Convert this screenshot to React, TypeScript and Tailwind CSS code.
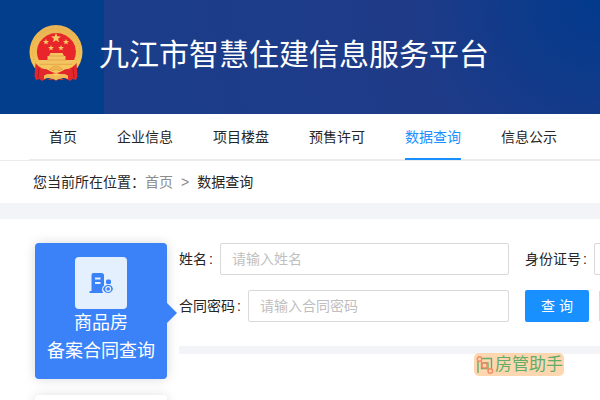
import React from "react";

const navItems = ["首页", "企业信息", "项目楼盘", "预售许可", "数据查询", "信息公示"];

function Star({ x, y, r }: { x: number; y: number; r: number }) {
  const points = Array.from({ length: 10 }, (_, i) => {
    const radius = i % 2 === 0 ? r : r * 0.42;
    const angle = (Math.PI / 5) * i - Math.PI / 2;
    return `${(x + radius * Math.cos(angle)).toFixed(2)},${(y + radius * Math.sin(angle)).toFixed(2)}`;
  }).join(" ");
  return <polygon points={points} fill="#f6cb63" />;
}

function Emblem() {
  return (
    <svg className="h-14 w-[54px] shrink-0" viewBox="0 0 54 56" role="img" aria-label="国徽">
      <defs>
        <linearGradient id="gold" x1="0" y1="0" x2="0" y2="1">
          <stop offset="0" stopColor="#e8b456" />
          <stop offset="0.5" stopColor="#f2bd50" />
          <stop offset="1" stopColor="#fad067" />
        </linearGradient>
      </defs>
      <ellipse cx="27" cy="27" rx="26.5" ry="27" fill="url(#gold)" />
      <path d="M6.500 38 Q10 43 18 45 L17 54 L13 56 L10.500 54 L7 55 L5.500 51 Z" fill="#e2282b" />
      <path d="M47.500 38 Q44 43 36 45 L37 54 L41 56 L43.500 54 L47 55 L48.500 51 Z" fill="#e2282b" />
      <ellipse cx="27" cy="26" rx="23.500" ry="22.500" fill="none" stroke="#dca047" strokeWidth="0.800" strokeDasharray="1 2" />
      <path d="M9.800 35 A19.500 18.800 0 1 1 45 35 Z" fill="#e8252b" />
      <Star x={27} y={13} r={5.2} />
      <Star x={17} y={17} r={3.2} />
      <Star x={37} y={17} r={3.2} />
      <Star x={22} y={23} r={3} />
      <Star x={32} y={23} r={3} />
      <path d="M21.500 28 H33.500 L35 31 H20 Z M18.500 31 H36.500 V35 H18.500 Z M10 35 H44.500 V39 H10 Z" fill="#f4c461" />
      <path d="M20 31 H35 M18 35 H37 M11 39.300 H43.500" stroke="#dd9040" strokeWidth="0.600" />
      <path d="M14 44 Q18 43.500 21 46 Q27 50 33 46 Q36 43.500 40 44 L39 49 Q33 50 27 48 Q21 50 15 49 Z" fill="#e2282b" />
      <path d="M20.500 44 Q27 38 33.500 44 Q30 47 27 44.500 Q24 47 20.500 44 Z" fill="#f0b450" stroke="#d9923a" strokeWidth="0.500" />
      <path d="M15 54 V50.500 Q21 48 27 51 Q33 48 39 50.500 V54 Q33 51.500 27 55.500 Q21 51.500 15 54 Z" fill="#f2b955" />
      <path d="M18 55 Q22 52.500 27 55.800 Q32 52.500 36 55 Z" fill="#e2282b" />
      <path d="M10 43 L9 53 M44 43 L45 53" stroke="#b71824" strokeWidth="1" fill="none" />
    </svg>
  );
}

function HouseIcon() {
  return (
    <svg className="h-6 w-6" viewBox="0 0 24 24" aria-hidden="true">
      <path
        fill="#3b82f8"
        fillRule="evenodd"
        d="M4.500 2 H12.500 Q15 2 15 4.500 V14.500 Q13 16 13 18.500 Q13 20.500 14.300 22 H0.500 V20.500 Q0.500 20 1.500 20 H2.500 V4 Q2.500 2 4.500 2 Z M6 6.500 V8.500 H11.500 V6.500 Z M6 11 V13 H11.500 V11 Z"
      />
      <rect x="17" y="8.500" width="5" height="4.500" rx="1.500" fill="#3b82f8" />
      <path d="M14 18 Q16 13.800 19.300 13.800 Q22.800 13.800 24 18 Q22.500 22 19.200 22 Q15.500 22 14 18 Z" fill="#3b82f8" />
      <circle cx="19.200" cy="18" r="2.400" fill="none" stroke="#e4f0fe" strokeWidth="1.200" />
    </svg>
  );
}

function BadgeMark() {
  return (
    <svg className="h-[18px] w-[18px] shrink-0" viewBox="0 0 18 18" fill="none" aria-hidden="true">
      <path d="M2 5 V17 M6 2.500 H15.500 V13" stroke="#62ae68" strokeWidth="1.400" />
      <path d="M5.500 7 H12 V12.500 H5.500 Z" stroke="#62ae68" strokeWidth="1.300" />
      <path d="M4.500 4.500 L6.500 7 M10.500 11.500 L12.500 13.500" stroke="#f68a64" strokeWidth="1.200" />
      <circle cx="3.500" cy="3" r="2.200" stroke="#f68a64" strokeWidth="1.400" />
      <circle cx="8.500" cy="9.500" r="2.600" stroke="#f68a64" strokeWidth="1.400" />
      <circle cx="14.300" cy="15" r="2.300" stroke="#f68a64" strokeWidth="1.400" />
    </svg>
  );
}

function Field({ id, label, placeholder }: { id: string; label: string; placeholder?: string }) {
  return (
    <div className="flex h-8 items-center">
      <label htmlFor={id} className="flex shrink-0">
        {label}
        <span className="w-[13px] pl-0.5">:</span>
      </label>
      <input
        id={id}
        type="text"
        placeholder={placeholder}
        className="h-8 min-w-0 flex-1 rounded-xs border border-[#d9d9d9] px-[11px] placeholder:text-[#bfbfbf]"
      />
    </div>
  );
}

export default function App() {
  return (
    <div className="relative h-screen overflow-hidden bg-white font-['Liberation_Sans','Noto_Sans_CJK_SC',sans-serif] text-sm text-[#262626]">
      <header className="flex h-[114px] items-center gap-4 bg-[linear-gradient(90deg,#023e8c_0,#023e8c_104px,transparent_104px),radial-gradient(circle_at_100%_0,#023a8c_0,#1f3b88_190px,#193e8b_100%)] pr-6 pb-2 pl-[29px]">
        <Emblem />
        <h1 className="pt-1 text-3xl whitespace-nowrap text-white">九江市智慧住建信息服务平台</h1>
      </header>

      <nav className="border-b border-[#ececec] pl-[29px]">
        <ul className="flex h-[46px] border-b border-[#ececec]">
          {navItems.map((item) => (
            <li key={item} className="mx-5 shrink-0">
              <a
                href="#"
                aria-current={item === "数据查询" ? "page" : undefined}
                className={
                  item === "数据查询"
                    ? "block h-[46px] border-b-2 border-[#1890ff] leading-[46px] text-[#1890ff]"
                    : "block h-[46px] leading-[46px]"
                }
              >
                {item}
              </a>
            </li>
          ))}
        </ul>
      </nav>

      <div className="flex h-[42px] items-center pl-[33px]">
        <span>您当前所在位置：</span>
        <a href="#" className="text-[#8c8c8c]">首页</a>
        <span className="mx-2 text-[#8c8c8c]">&gt;</span>
        <span>数据查询</span>
      </div>
      <div className="h-4 bg-[#f2f4f7]" />

      <main className="flex gap-3 pt-6 pl-[35px]">
        <aside className="flex w-[132px] shrink-0 flex-col gap-4">
          <button
            type="button"
            className="relative flex h-[136px] flex-col items-center rounded-sm bg-[#3b82f8] pt-3.5 text-lg leading-7 text-white shadow-[0_0_12px_rgba(0,0,0,0.15)]"
          >
            <span className="flex h-[52px] w-[52px] items-center justify-center rounded-sm bg-[#e4f0fe]">
              <HouseIcon />
            </span>
            <span>商品房</span>
            <span>备案合同查询</span>
            <span className="absolute top-[60px] left-full h-5 w-2.5 bg-[#3b82f8] [clip-path:polygon(0_0,100%_50%,0_100%)]" />
          </button>
          <div className="h-[136px] rounded-sm bg-white shadow-[0_0_12px_rgba(0,0,0,0.12)]" />
        </aside>

        <section className="min-w-0 flex-1">
          <form className="grid grid-cols-[330px_330px] gap-x-4 gap-y-[15px]">
            <Field id="name" label="姓名" placeholder="请输入姓名" />
            <Field id="id-number" label="身份证号" />
            <Field id="password" label="合同密码" placeholder="请输入合同密码" />
            <div className="flex gap-2.5">
              <button type="submit" className="h-8 w-16 rounded-xs bg-[#1890ff] text-white">查 询</button>
              <button type="reset" className="h-8 w-16 rounded-xs border border-[#d9d9d9]" />
            </div>
          </form>
          <div className="mt-6 h-2 bg-[#f2f4f7]" />
        </section>
      </main>

      <div className="absolute top-[353px] right-9 flex h-[23px] w-[90px] items-center gap-px rounded-[5px] bg-[#fed6b0] pl-0.5 text-[17px] leading-none whitespace-nowrap text-[#62ae68]">
        <BadgeMark />
        <span>房管助手</span>
      </div>
    </div>
  );
}
